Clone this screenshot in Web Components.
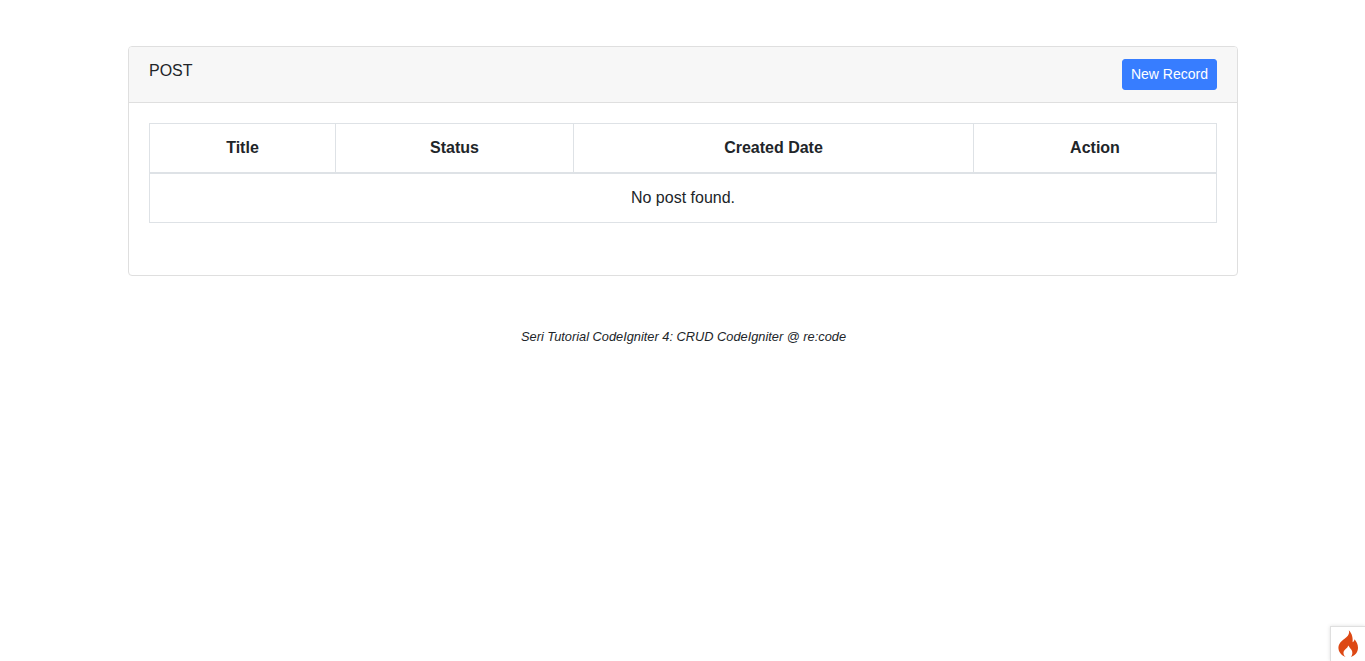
<!DOCTYPE html>
<html lang="en">
<head>
<meta charset="utf-8">
<title>POST</title>
<style>
  html, body { margin: 0; height: 100%; }
  body { position: relative; background-color: #fff; font: 16px/1.5 "Liberation Sans", Arial, sans-serif; color: #212529; }
</style>
</head>
<body>
<post-page>
  <post-card title-text="POST" action-text="New Record">
    <post-table></post-table>
  </post-card>
  <page-note>Seri Tutorial CodeIgniter 4: CRUD CodeIgniter @ re:code</page-note>
</post-page>
<debug-toolbar-icon></debug-toolbar-icon>

<script>
class PostPage extends HTMLElement {
  constructor() {
    super();
    this.attachShadow({ mode: 'open' });
    this.shadowRoot.innerHTML = `
      <style>
        :host { display: block; width: 1140px; margin: 0 auto; padding: 46px 14.5px 0 15.5px; box-sizing: border-box; }
      </style>
      <slot></slot>
    `;
  }
}

class PostCard extends HTMLElement {
  constructor() {
    super();
    this.attachShadow({ mode: 'open' });
    this.shadowRoot.innerHTML = `
      <style>
        :host { display: block; border: 1px solid #dfdfdf; border-radius: 4px; background: #fff; }
        .head {
          display: flex; justify-content: space-between; align-items: flex-start;
          padding: 12px 20px; background: #f7f7f7;
          border-bottom: 1px solid #dfdfdf; border-radius: 3px 3px 0 0;
        }
        .name { line-height: 24px; }
        a {
          display: block; padding: 4px 8px; font-size: 14px; line-height: 21px; border: 1px solid #377dff;
          border-radius: 3px; background: #377dff; color: #fff; text-decoration: none;
        }
        .body { padding: 20px 20px 52px; }
      </style>
      <div class="head">
        <span class="name">${this.getAttribute('title-text')}</span>
        <a href="#">${this.getAttribute('action-text')}</a>
      </div>
      <div class="body"><slot></slot></div>
    `;
  }
}

class PostTable extends HTMLElement {
  constructor() {
    super();
    this.attachShadow({ mode: 'open' });
    this.shadowRoot.innerHTML = `
      <style>
        :host { display: block; }
        table { width: 100%; table-layout: fixed; border-collapse: collapse; }
        th, td { padding: 12px; border: 1px solid #dee2e6; text-align: center; line-height: 24px; }
        th { border-bottom-width: 2px; font-weight: 700; }
      </style>
      <table>
        <colgroup>
          <col style="width:186px"><col style="width:238px"><col style="width:400px"><col>
        </colgroup>
        <thead>
          <tr><th>Title</th><th>Status</th><th>Created Date</th><th>Action</th></tr>
        </thead>
        <tbody>
          <tr><td colspan="4">No post found.</td></tr>
        </tbody>
      </table>
    `;
  }
}

class PageNote extends HTMLElement {
  constructor() {
    super();
    this.attachShadow({ mode: 'open' });
    this.shadowRoot.innerHTML = `
      <style>
        :host { display: block; margin-top: 51px; padding-left: 1px; font-size: 12.8px; line-height: 20px; font-style: italic; text-align: center; }
      </style>
      <slot></slot>
    `;
  }
}

class DebugToolbarIcon extends HTMLElement {
  constructor() {
    super();
    this.attachShadow({ mode: 'open' });
    this.shadowRoot.innerHTML = `
      <style>
        :host {
          position: absolute; right: 0; bottom: 0; width: 35px; height: 35px; box-sizing: border-box;
          display: flex; align-items: flex-start; padding: 3px 0 0 6px;
          background: #fff; border: 1px solid #dfdfdf; border-right: 0; border-bottom: 0;
          box-shadow: 0 0 4px #dfdfdf;
        }
        svg { display: block; width: 22px; height: 27px; }
      </style>
      <svg viewBox="0 0 22 27" aria-hidden="true">
        <path fill="#dd4814" d="M11.8 0.2C12.8 3.2 11.4 5.2 9.6 7C7.8 8.8 1.4 12.2 1.4 17.6C1.4 22 4.4 25.6 8.6 27C6.6 25.2 6 23 6.8 21.2C7.6 19.4 10.2 18.4 11.4 15.4C12.4 17.4 13.6 18.2 14.6 20C15.8 22.2 15.6 25 14 27C18.2 25.6 21 22 21 17.8C21 14.2 19.4 11.4 17.4 9.2C17.4 10.6 16.8 11.6 15.6 12.2C16 8 15.2 3.4 11.8 0.2Z"/>
      </svg>
    `;
  }
}

customElements.define('post-page', PostPage);
customElements.define('post-card', PostCard);
customElements.define('post-table', PostTable);
customElements.define('page-note', PageNote);
customElements.define('debug-toolbar-icon', DebugToolbarIcon);
</script>
</body>
</html>
